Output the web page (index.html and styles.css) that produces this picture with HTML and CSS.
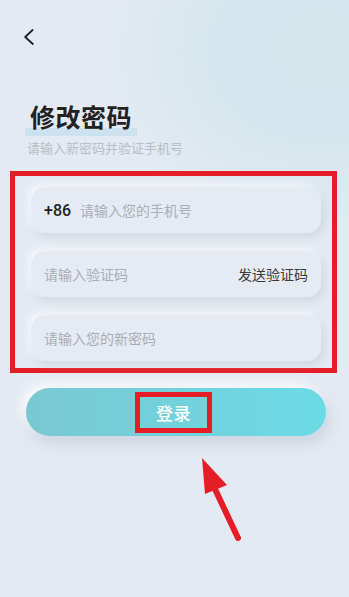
FILE: index.html
```html
<!DOCTYPE html>
<html lang="zh-CN">
<head>
<meta charset="utf-8">
<title>修改密码</title>
<link rel="stylesheet" href="styles.css">
</head>
<body>
<div class="page">
  <div class="topbar">
    <svg class="back" width="10" height="16" viewBox="0 0 10 16"><path d="M8.6 1 L1.2 8 L8.8 15" fill="none" stroke="#1f1f1f" stroke-width="1.8" stroke-linecap="round" stroke-linejoin="round"/></svg>
  </div>
  <div class="heading">
    <h1 class="title"><span class="title-text">修改密码</span></h1>
    <p class="subtitle">请输入新密码并验证手机号</p>
  </div>
  <div class="frame">
    <div class="field">
      <span class="code">+86</span>
      <span class="ph">请输入您的手机号</span>
    </div>
    <div class="field field-split">
      <span class="ph">请输入验证码</span>
      <span class="send">发送验证码</span>
    </div>
    <div class="field">
      <span class="ph">请输入您的新密码</span>
    </div>
  </div>
  <div class="btn">
    <span class="btn-label">登录</span>
  </div>
  <svg class="arrow" width="50" height="90" viewBox="0 0 50 90">
    <polygon points="7,3 10,39 32,30" fill="#e51d27"/>
    <line x1="19" y1="32" x2="43" y2="83" stroke="#e51d27" stroke-width="6" stroke-linecap="round"/>
  </svg>
</div>
</body>
</html>
```

FILE: styles.css
```css
html, body {
  margin: 0;
  padding: 0;
}
body {
  width: 349px;
  height: 597px;
  overflow: hidden;
  background:
    radial-gradient(ellipse 240px 200px at 320px 50px, #d2e6ec 0, #d3e6ed 90px, rgba(228,234,242,0) 220px),
    #e4eaf2;
  font-family: "Noto Sans CJK SC", "Noto Sans", sans-serif;
}
.page {
  position: relative;
  height: 597px;
}
.topbar {
  height: 100px;
  box-sizing: border-box;
  padding: 29px 0 0 24px;
}
.back {
  display: block;
}
.heading {
  margin-left: 25px;
}
.title {
  margin: 0;
  font-size: 25px;
  line-height: 32px;
  font-weight: 700;
  color: #222;
}
.title-text {
  display: inline-block;
  padding: 0 5px 4px;
  letter-spacing: 0.5px;
  background: linear-gradient(#cde2f1, #cde2f1) left bottom / 100% 8px no-repeat;
}
.subtitle {
  margin: 3px 0 0 2px;
  font-size: 13px;
  line-height: 18px;
  color: #b7bec7;
}
.frame {
  margin: 14px 12px 0 10px;
  border: 5px solid #e51d27;
  padding: 11px 11px 7px 16px;
  display: flex;
  flex-direction: column;
  gap: 18px;
}
.field {
  height: 46px;
  border-radius: 14px;
  background: #e6ebf3;
  box-shadow: 3px 4px 8px rgba(170, 182, 200, 0.35), -3px -3px 7px rgba(255, 255, 255, 0.75);
  display: flex;
  align-items: center;
  padding: 0 13px;
  font-size: 14px;
}
.field-split {
  justify-content: space-between;
}
.code {
  font-family: Roboto, "Liberation Sans", sans-serif;
  font-size: 16px;
  font-weight: 500;
  color: #1f1f1f;
  margin-right: 9px;
}
.ph {
  color: #a9aeb6;
}
.send {
  color: #3a3a3a;
}
.btn {
  margin: 15px 0 0 26px;
  width: 300px;
  height: 48px;
  border-radius: 24px;
  background: linear-gradient(90deg, #79c8d1, #6bdbe6);
  box-shadow: 4px 8px 14px rgba(160, 175, 195, 0.35), -5px -5px 12px rgba(255, 255, 255, 0.8);
  display: flex;
  align-items: center;
  justify-content: center;
}
.btn-label {
  box-sizing: border-box;
  width: 77px;
  height: 41px;
  border: 5px solid #e51d27;
  display: flex;
  align-items: center;
  justify-content: center;
  color: #fff;
  font-size: 17px;
  font-weight: 500;
  letter-spacing: 0.5px;
  margin-left: -5px;
  margin-top: 1px;
}
.arrow {
  position: absolute;
  left: 195px;
  top: 455px;
}
```
